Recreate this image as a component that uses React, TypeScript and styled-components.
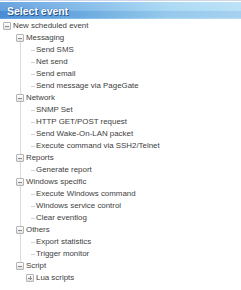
import React from "react";
import styled, { createGlobalStyle } from "styled-components";

const Global = createGlobalStyle`
  html, body { margin: 0; padding: 0; background: #fff; }
  body { font-family: "Liberation Sans", Arial, sans-serif; }
`;

const Panel = styled.div`
  width: 241px;
  height: 290px;
  border-top: 1px solid #cdd5e8;
  box-sizing: border-box;
  overflow: hidden;
`;

const Header = styled.div`
  margin-top: 1px;
  height: 17px;
  display: flex;
  align-items: center;
  padding-left: 7px;
  color: #fff;
  font-weight: bold;
  font-size: 10.5px;
  text-shadow: 1px 1px 0 #2a5a94, 0 0 1px #2a5a94;
  background:
    linear-gradient(to bottom, rgba(255,255,255,0.18) 0%, rgba(255,255,255,0.12) 50%, rgba(0,40,120,0.06) 55%, rgba(0,40,120,0.06) 90%, rgba(255,255,255,0.2) 100%),
    linear-gradient(to right, #4e92da 0%, #73b3e6 35%, #9fd3f3 70%, #b0dcf6 100%);
`;

const Tree = styled.div`
  font-size: 7.9px;
  color: #404040;
  padding-top: 1px;
`;

const Row = styled.div<{ $shift?: number }>`
  display: flex;
  align-items: center;
  height: 12px;
  line-height: 12px;
  white-space: nowrap;
  margin-left: ${(p) => p.$shift ?? 0}px;
`;

const Toggle = styled.span<{ $open?: boolean }>`
  position: relative;
  flex: none;
  width: 8px;
  height: 8px;
  box-sizing: border-box;
  border: 1px solid #b4b4b4;
  border-radius: 1px;
  background: linear-gradient(#ffffff, #e2e2e2);
  margin-right: 2px;
  display: flex;
  align-items: center;
  justify-content: center;
  &::before {
    content: "";
    width: 4px;
    height: 1px;
    background: #8a8a8a;
  }
  &::after {
    content: "";
    display: ${(p) => (p.$open ? "none" : "block")};
    position: absolute;
    left: 2.5px;
    top: 1px;
    width: 1px;
    height: 4px;
    background: #8a8a8a;
  }
`;

const Dash = styled.span`
  flex: none;
  width: 4px;
  height: 1px;
  background: #d2d2d2;
  margin-right: 1px;
`;

const RootRow = styled(Row)`
  padding-left: 3px;
`;

const GroupList = styled.div`
  margin-left: 20px;
`;

const GroupItem = styled.div<{ $first?: boolean; $last?: boolean }>`
  background-image: linear-gradient(#dadada, #dadada);
  background-repeat: no-repeat;
  background-position: 0 ${(p) => (p.$first ? "6px" : "0")};
  background-size: 1px ${(p) => (p.$last ? "6px" : p.$first ? "calc(100% - 6px)" : "100%")};
`;

const Children = styled.div`
  padding-left: 11px;
`;

type Group = { name: string; items: { name: string; folder?: boolean }[] };

const groups: Group[] = [
  { name: "Messaging", items: [{ name: "Send SMS" }, { name: "Net send" }, { name: "Send email" }, { name: "Send message via PageGate" }] },
  { name: "Network", items: [{ name: "SNMP Set" }, { name: "HTTP GET/POST request" }, { name: "Send Wake-On-LAN packet" }, { name: "Execute command via SSH2/Telnet" }] },
  { name: "Reports", items: [{ name: "Generate report" }] },
  { name: "Windows specific", items: [{ name: "Execute Windows command" }, { name: "Windows service control" }, { name: "Clear eventlog" }] },
  { name: "Others", items: [{ name: "Export statistics" }, { name: "Trigger monitor" }] },
  { name: "Script", items: [{ name: "Lua scripts", folder: true }] },
];

export default function App() {
  return (
    <>
      <Global />
      <Panel>
        <Header>Select event</Header>
        <Tree>
          <RootRow>
            <Toggle $open />
            New scheduled event
          </RootRow>
          <GroupList>
            {groups.map((g, i) => (
              <GroupItem key={g.name} $first={i === 0} $last={i === groups.length - 1}>
                <Row $shift={-4}>
                  <Toggle $open />
                  {g.name}
                </Row>
                <Children>
                  {g.items.map((it) =>
                    it.folder ? (
                      <Row key={it.name} $shift={-5}>
                        <Toggle />
                        {it.name}
                      </Row>
                    ) : (
                      <Row key={it.name}>
                        <Dash />
                        {it.name}
                      </Row>
                    )
                  )}
                </Children>
              </GroupItem>
            ))}
          </GroupList>
        </Tree>
      </Panel>
    </>
  );
}
